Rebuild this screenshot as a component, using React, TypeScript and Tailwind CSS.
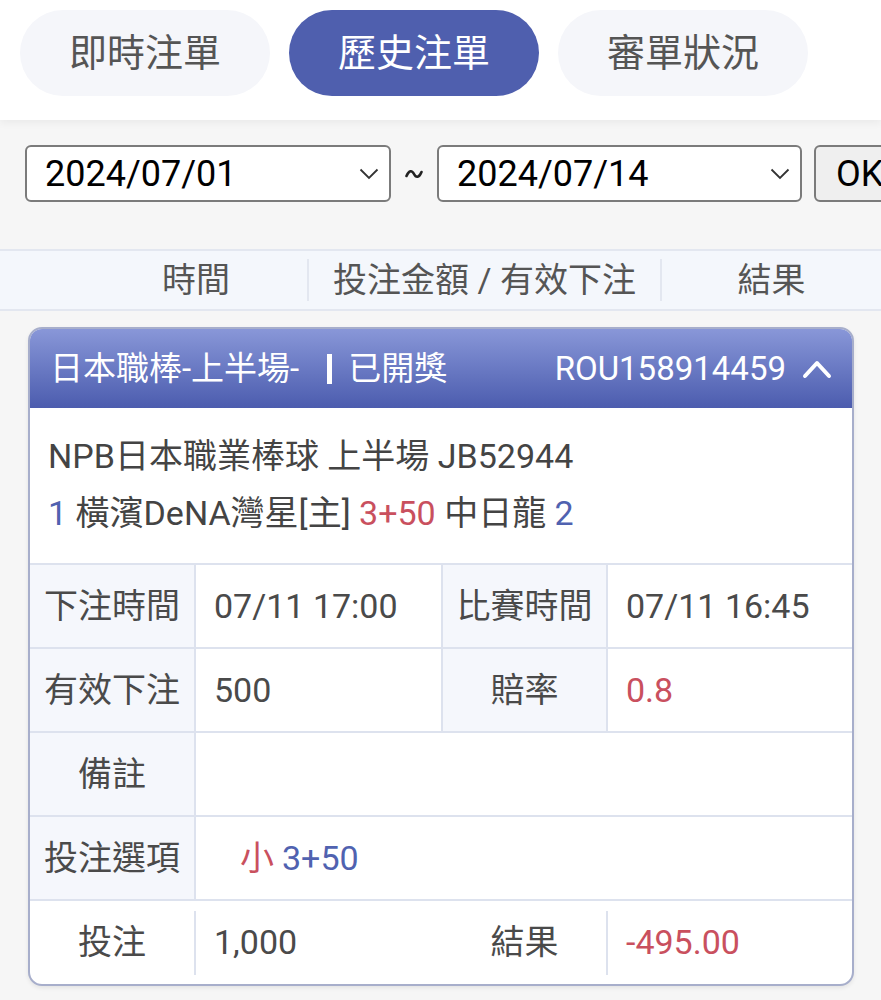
import React from "react";

const font = { fontFamily: "Roboto, 'Noto Sans CJK TC', 'Noto Sans', sans-serif" };

function FakeSelect({ value, w }: { value: string; w: string }) {
  return (
    <div className={`${w} shrink-0 h-[57px] bg-white border-2 border-[#7b7b7b] rounded-[6px] flex items-center justify-between pl-[18px] pr-[10px]`}>
      <span className="text-[36px] text-black leading-none">{value}</span>
      <svg width="20" height="12" viewBox="0 0 20 12" fill="none">
        <path d="M1.5 1.5 L10 10 L18.5 1.5" stroke="#333" strokeWidth="1.8" />
      </svg>
    </div>
  );
}

function Label({ children, bg = true }: { children: React.ReactNode; bg?: boolean }) {
  return (
    <div className={`w-[164px] shrink-0 flex items-center justify-center ${bg ? "bg-[#f5f7fc]" : ""}`}>
      {children}
    </div>
  );
}

export default function App() {
  return (
    <div className="w-[881px] h-[1000px] bg-[#f6f6f6] overflow-hidden text-[#4a4a4a]" style={font}>
      {/* Tabs */}
      <div className="h-[120px] bg-white flex items-start gap-[19px] pl-[20px] pt-[10px] shadow-[0_3px_8px_rgba(0,0,0,0.05)] relative">
        <div className="w-[250px] h-[86px] rounded-full bg-[#f5f6fa] flex items-center justify-center text-[38px] text-[#555]">即時注單</div>
        <div className="w-[250px] h-[86px] rounded-full bg-[#4f5fae] flex items-center justify-center text-[38px] text-white">歷史注單</div>
        <div className="w-[250px] h-[86px] rounded-full bg-[#f5f6fa] flex items-center justify-center text-[38px] text-[#555]">審單狀況</div>
      </div>

      {/* Date filter */}
      <div className="flex items-center pl-[25px] pt-[25px] h-[82px]">
        <FakeSelect value="2024/07/01" w="w-[366px]" />
        <div className="w-[46px] shrink-0 flex justify-center">
          <svg width="18" height="10" viewBox="0 0 18 10">
            <path d="M1.5 7 C4 1, 7 1, 9 5 S14 9, 16.5 3" stroke="#222" strokeWidth="2.6" fill="none" strokeLinecap="round" />
          </svg>
        </div>
        <FakeSelect value="2024/07/14" w="w-[365px]" />
        <div className="ml-[12px] w-[100px] h-[57px] bg-[#efefef] border-2 border-[#7b7b7b] rounded-[6px] flex items-center pl-[20px] text-[36px] text-black shrink-0">OK</div>
      </div>

      {/* Column header */}
      <div className="mt-[47px] h-[62px] bg-[#f4f7fc] border-y-2 border-[#e3e7f0] flex items-center text-[34px] text-[#555]">
        <div className="w-[307px] h-full flex items-center justify-end pr-[77px]">時間</div>
        <div className="w-[2px] h-[42px] bg-[#e3e7f0]" />
        <div className="w-[351px] flex items-center justify-center">投注金額 / 有效下注</div>
        <div className="w-[2px] h-[42px] bg-[#e3e7f0]" />
        <div className="flex-1 flex items-center justify-center">結果</div>
      </div>

      {/* Card */}
      <div className="mt-[16px] ml-[28px] w-[826px] rounded-[14px] border-2 border-[#a7aecb] overflow-hidden bg-white shadow-[0_2px_4px_rgba(0,0,0,0.08)]">
        <div className="h-[79px] bg-gradient-to-b from-[#8997d8] to-[#4c5cae] flex items-center pl-[20px] pr-[20px] text-white text-[33px]">
          <span>日本職棒-上半場-</span>
          <span className="ml-[28px] w-[5px] h-[30px] bg-white" />
          <span className="ml-[16px]">已開獎</span>
          <span className="ml-auto">ROU158914459</span>
          <svg className="ml-[16px]" width="30" height="20" viewBox="0 0 30 20" fill="none">
            <path d="M3 17 L15 4 L27 17" stroke="white" strokeWidth="4" strokeLinecap="round" strokeLinejoin="round" />
          </svg>
        </div>
        <div className="h-[157px] pl-[18px] pt-[27px] text-[34px] text-[#444] border-b-2 border-[#dde2ee]">
          <div className="leading-[42px]">NPB日本職業棒球 上半場 JB52944</div>
          <div className="leading-[42px] mt-[15px]">
            <span className="text-[#5062b0]">1</span> 橫濱DeNA灣星[主] <span className="text-[#c9505e]">3+50</span> 中日龍 <span className="text-[#5062b0]">2</span>
          </div>
        </div>

        {/* Table */}
        <div className="text-[34px] text-[#4a4a4a]">
          <div className="flex h-[84px] border-b-2 border-[#dde2ee]">
            <Label>下注時間</Label>
            <div className="w-[249px] border-x-2 border-[#dde2ee] flex items-center pl-[18px]">07/11 17:00</div>
            <div className="w-[163px] bg-[#f5f7fc] flex items-center justify-center">比賽時間</div>
            <div className="flex-1 border-l-2 border-[#dde2ee] flex items-center pl-[18px]">07/11 16:45</div>
          </div>
          <div className="flex h-[84px] border-b-2 border-[#dde2ee]">
            <Label>有效下注</Label>
            <div className="w-[249px] border-x-2 border-[#dde2ee] flex items-center pl-[18px]">500</div>
            <div className="w-[163px] bg-[#f5f7fc] flex items-center justify-center">賠率</div>
            <div className="flex-1 border-l-2 border-[#dde2ee] flex items-center pl-[18px] text-[#c9505e]">0.8</div>
          </div>
          <div className="flex h-[84px] border-b-2 border-[#dde2ee]">
            <Label>備註</Label>
            <div className="flex-1 border-l-2 border-[#dde2ee]" />
          </div>
          <div className="flex h-[84px] border-b-2 border-[#dde2ee]">
            <Label>投注選項</Label>
            <div className="flex-1 border-l-2 border-[#dde2ee] flex items-center pl-[44px]">
              <span className="text-[#c9505e]">小</span>
              <span className="ml-[8px] text-[#5062b0]">3+50</span>
            </div>
          </div>
          <div className="flex h-[83px] items-center">
            <div className="w-[164px] flex items-center justify-center">投注</div>
            <div className="w-[2px] h-[64px] bg-[#dde2ee]" />
            <div className="w-[247px] flex items-center pl-[18px]">1,000</div>
            <div className="w-[163px] flex items-center justify-center">結果</div>
            <div className="w-[2px] h-[64px] bg-[#dde2ee]" />
            <div className="flex-1 flex items-center pl-[18px] text-[#c9505e]">-495.00</div>
          </div>
        </div>
      </div>
    </div>
  );
}
